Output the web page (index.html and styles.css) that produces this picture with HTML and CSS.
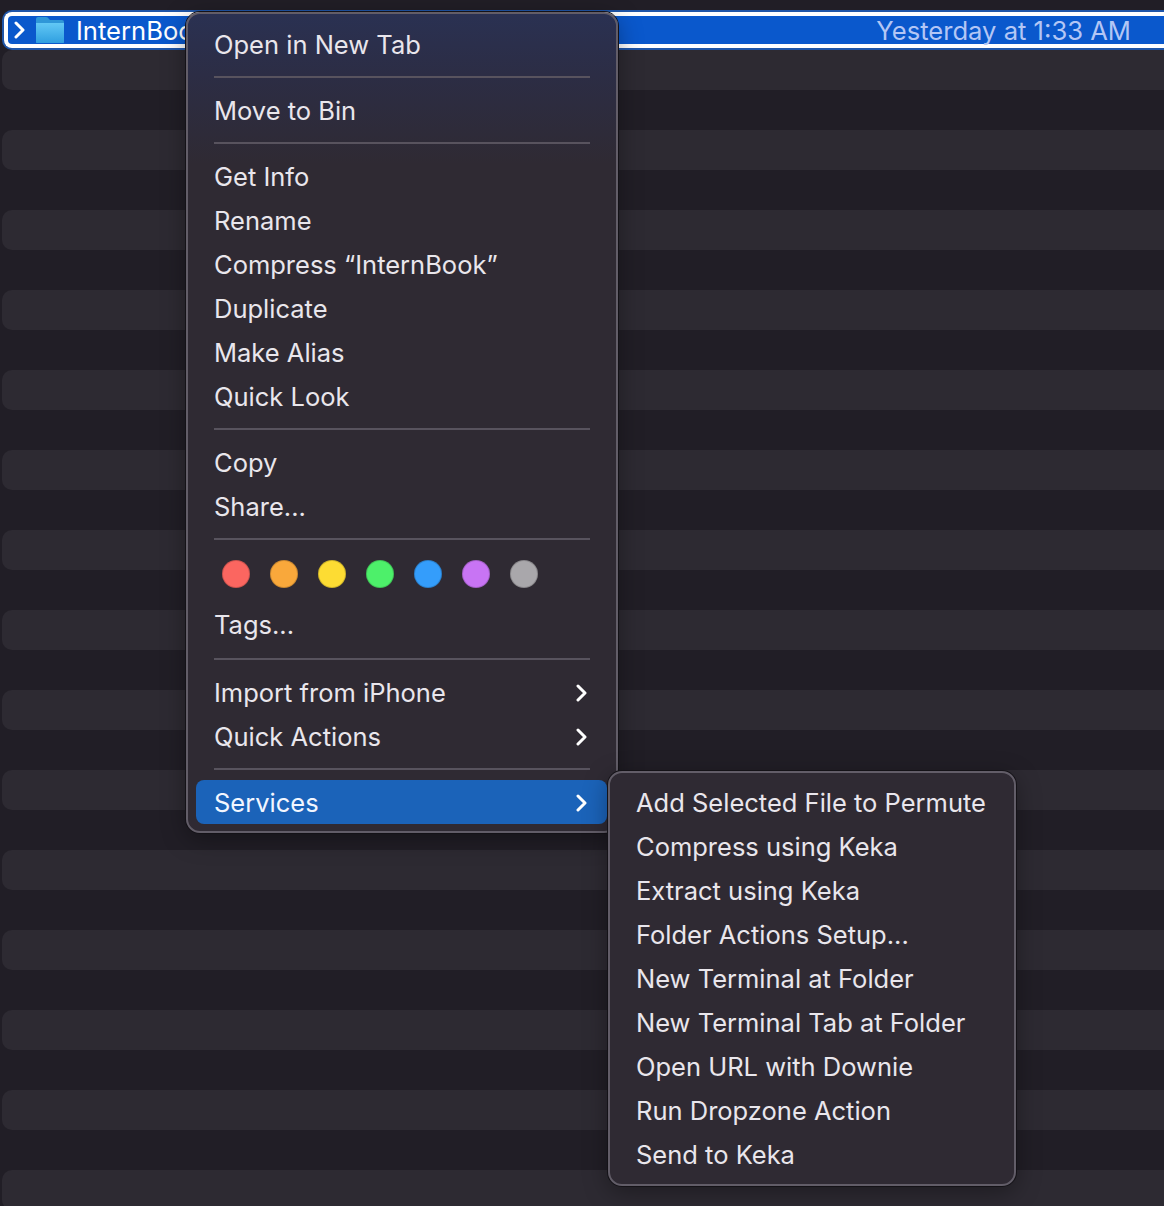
FILE: index.html
```html
<!DOCTYPE html>
<html lang="en">
  <head>
    <meta charset="UTF-8" />
    <title>Finder context menu</title>
    <link rel="stylesheet" href="styles.css">
  </head>
  <body>
    <main class="list">
      <div class="selected">
        <svg class="row-chevron" viewBox="0 0 12 18"><path d="M2 2l7 7-7 7" /></svg>
        <svg class="folder" viewBox="0 0 28 28">
          <defs>
            <linearGradient id="folderFill" x1="0" y1="0" x2="0" y2="1">
              <stop offset="0" stop-color="#62c8f5" />
              <stop offset="1" stop-color="#2f9fe0" />
            </linearGradient>
          </defs>
          <path d="M0 3q0-2 2-2h8q2 0 3 2l1 1h12q2 0 2 2v20q0 1-1 1H1q-1 0-1-1z" fill="#2f97d8" />
          <path d="M0 7h28v19q0 1-1 1H1q-1 0-1-1z" fill="url(#folderFill)" />
        </svg>
        <span class="name">InternBook</span>
        <span class="date">Yesterday at 1:33 AM</span>
      </div>
      <div class="row light"></div><div class="row"></div>
      <div class="row light"></div><div class="row"></div>
      <div class="row light"></div><div class="row"></div>
      <div class="row light"></div><div class="row"></div>
      <div class="row light"></div><div class="row"></div>
      <div class="row light"></div><div class="row"></div>
      <div class="row light"></div><div class="row"></div>
      <div class="row light"></div><div class="row"></div>
      <div class="row light"></div><div class="row"></div>
      <div class="row light"></div><div class="row"></div>
      <div class="row light"></div><div class="row"></div>
      <div class="row light"></div><div class="row"></div>
      <div class="row light"></div><div class="row"></div>
      <div class="row light"></div><div class="row"></div>
      <div class="row light"></div>
    </main>

    <nav class="menu main-menu">
      <div class="item">Open in New Tab</div>
      <hr />
      <div class="item">Move to Bin</div>
      <hr />
      <div class="item">Get Info</div>
      <div class="item">Rename</div>
      <div class="item">Compress “InternBook”</div>
      <div class="item">Duplicate</div>
      <div class="item">Make Alias</div>
      <div class="item">Quick Look</div>
      <hr />
      <div class="item">Copy</div>
      <div class="item">Share...</div>
      <hr />
      <div class="tags">
        <span class="dot red"></span>
        <span class="dot orange"></span>
        <span class="dot yellow"></span>
        <span class="dot green"></span>
        <span class="dot blue"></span>
        <span class="dot purple"></span>
        <span class="dot grey"></span>
      </div>
      <div class="item">Tags...</div>
      <hr class="wide" />
      <div class="item">Import from iPhone
        <svg class="chevron" viewBox="0 0 12 18"><path d="M2 2l7 7-7 7" /></svg>
      </div>
      <div class="item">Quick Actions
        <svg class="chevron" viewBox="0 0 12 18"><path d="M2 2l7 7-7 7" /></svg>
      </div>
      <hr />
      <div class="item active">Services
        <svg class="chevron" viewBox="0 0 12 18"><path d="M2 2l7 7-7 7" /></svg>
      </div>
    </nav>

    <nav class="menu sub-menu">
      <div class="item">Add Selected File to Permute</div>
      <div class="item">Compress using Keka</div>
      <div class="item">Extract using Keka</div>
      <div class="item">Folder Actions Setup...</div>
      <div class="item">New Terminal at Folder</div>
      <div class="item">New Terminal Tab at Folder</div>
      <div class="item">Open URL with Downie</div>
      <div class="item">Run Dropzone Action</div>
      <div class="item">Send to Keka</div>
    </nav>
  </body>
</html>
```

FILE: styles.css
```css
html,
body {
  margin: 0;
  height: 1206px;
  overflow: hidden;
  background: #211e26;
  font-family: Inter, "Liberation Sans", sans-serif;
}

.list {
  padding-top: 10px;
}

.selected {
  display: flex;
  align-items: center;
  height: 36px;
  margin: 2px 0 2px 4px;
  box-sizing: border-box;
  border: solid #fff;
  border-width: 4px 0 4px 4px;
  border-radius: 8px 0 0 8px;
  box-shadow: 0 0 0 2px #1f55a8;
  background: #0a58cc;
  color: #fff;
  font-size: 25.6px;
}

.row-chevron {
  width: 12px;
  height: 18px;
  margin-left: 6px;
  flex: none;
}

.row-chevron path,
.chevron path {
  fill: none;
  stroke: #fff;
  stroke-width: 3;
  stroke-linecap: round;
  stroke-linejoin: round;
}

.folder {
  width: 28px;
  height: 28px;
  margin-left: 10px;
  flex: none;
}

.name {
  margin-left: 12px;
}

.date {
  margin-left: auto;
  margin-right: 33px;
  color: #b3c6f5;
}

.row {
  height: 40px;
  margin-left: 2px;
}

.light {
  background: #2d2a32;
  border-radius: 10px 0 0 10px;
}

.menu {
  position: absolute;
  box-sizing: border-box;
  padding: 9px 0 0;
  background: #2f2a33;
  border: 2px solid #625d68;
  border-radius: 14px;
  box-shadow: 0 0 0 1px #141217, 0 6px 24px rgba(0, 0, 0, 0.35);
  color: #e9e6ec;
  font-size: 25.5px;
  white-space: nowrap;
}

.main-menu {
  left: 186px;
  top: 12px;
  width: 432px;
  height: 821px;
  background: linear-gradient(#2a3152 0, #2c2d45 60px, #2f2a33 150px);
}

.sub-menu {
  left: 608px;
  top: 771px;
  width: 408px;
  height: 415px;
  padding-top: 8px;
}

.item {
  display: flex;
  align-items: center;
  justify-content: space-between;
  height: 44px;
  padding: 0 28px 0 26px;
  line-height: 44px;
}

.main-menu hr {
  height: 2px;
  margin: 9px 26px 11px 26px;
  border: 0;
  background: #58535e;
}

.main-menu hr.wide {
  margin: 11px 26px;
}

.chevron {
  width: 12px;
  height: 18px;
  flex: none;
}

.active {
  box-sizing: border-box;
  height: 44px;
  margin: -1px 9px 0 8px;
  padding: 2px 19px 0 18px;
  border-radius: 8px;
  background: #1b63b9;
  color: #f2f6ff;
}

.tags {
  display: flex;
  gap: 20px;
  height: 52px;
  padding: 9px 0 0 34px;
  box-sizing: border-box;
}

.dot {
  width: 28px;
  height: 28px;
  box-sizing: border-box;
  border: 1px solid rgba(0, 0, 0, 0.18);
  border-radius: 50%;
}

.red { background: #fb6660; }
.orange { background: #f9a83b; }
.yellow { background: #fddc33; }
.green { background: #4df06a; }
.blue { background: #349dfb; }
.purple { background: #c874f4; }
.grey { background: #a9a7ab; }
```
